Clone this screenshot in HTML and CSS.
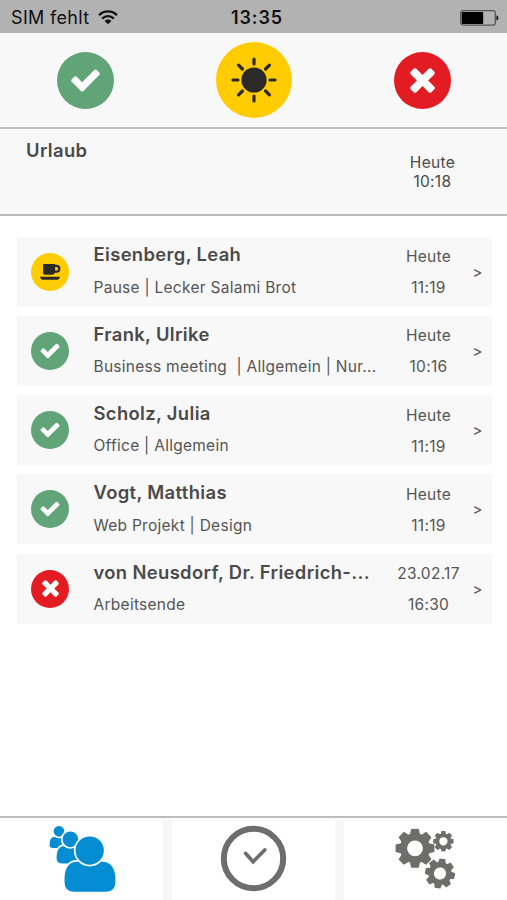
FILE: index.html
```html
<!DOCTYPE html>
<html lang="de">
<head>
<meta charset="utf-8">
<title>Team</title>
<link rel="stylesheet" href="styles.css">
</head>
<body>
<svg class="defs" aria-hidden="true">
  <symbol id="check" viewBox="0 32 1792 1792"><path d="M1671 566q0 40-28 68l-724 724-136 136q-28 28-68 28t-68-28l-136-136-362-362q-28-28-28-68t28-68l136-136q28-28 68-28t68 28l294 295 656-657q28-28 68-28t68 28l136 136q28 28 28 68z"/></symbol>
  <symbol id="cross" viewBox="0 64 1792 1792"><path d="M1490 1322q0 40-28 68l-136 136q-28 28-68 28t-68-28l-294-294-294 294q-28 28-68 28t-68-28l-136-136q-28-28-28-68t28-68l294-294-294-294q-28-28-28-68t28-68l136-136q28-28 68-28t68 28l294 294 294-294q28-28 68-28t68 28l136 136q28 28 28 68t-28 68l-294 294 294 294q28 28 28 68z"/></symbol>
  <symbol id="gear" viewBox="-20 -20 40 40">
    <circle r="11.6" fill="none" stroke="currentColor" stroke-width="7.2"/>
    <g id="teeth"><path id="tooth" d="M-5.2-13.5L-3.8-19.7H3.8L5.2-13.5zM-5.2 13.5L-3.8 19.7H3.8L5.2 13.5z"/><use href="#tooth" transform="rotate(45)"/><use href="#tooth" transform="rotate(90)"/><use href="#tooth" transform="rotate(135)"/></g>
  </symbol>
</svg>
<div class="app">
  <div class="status">
    <div class="carrier"><span>SIM fehlt</span>
      <svg width="20" height="15" viewBox="0 0 20 15" fill="none" stroke="#111" stroke-width="2.3"><path d="M1.1 5.2a12.4 12.4 0 0 1 17.8 0M4.2 8.6a8.2 8.2 0 0 1 11.6 0"/><path d="M10 14.2L6.6 11a4.8 4.8 0 0 1 6.8 0z" fill="#111" stroke="none"/></svg>
    </div>
    <div class="time">13:35</div>
    <svg class="battery" width="39" height="16" viewBox="0 0 39 16"><rect x=".7" y=".7" width="34.6" height="14.4" rx="2.6" fill="none" stroke="#555" stroke-width="1.3"/><rect x="1.8" y="1.9" width="21.4" height="12" rx="1" fill="#000"/><path d="M36.3 5.2q2.3.5 2.3 2.7t-2.3 2.7z" fill="#222"/></svg>
  </div>
  <div class="actions">
    <div class="slot first"><div class="badge big green"><svg width="33" height="33" fill="#fff"><use href="#check"/></svg></div></div>
    <div class="slot"><div class="badge huge yellow">
      <svg width="48" height="48" viewBox="-24 -24 48 48"><circle r="12.6" fill="#2b2a29"/><g stroke="#2b2a29" stroke-width="3.2" stroke-linecap="round"><path d="M0-21V-16M0 21V16M-21 0H-16M21 0H16M-15.4-14.8L-11.6-11M15.4-14.8L11.6-11M-15.4 14.8L-11.6 11M15.4 14.8L11.6 11"/></g></svg>
    </div></div>
    <div class="slot"><div class="badge big red"><svg width="37" height="37" fill="#fff"><use href="#cross"/></svg></div></div>
  </div>
  <div class="current">
    <div class="title">Urlaub</div>
    <div class="since"><span>Heute</span><span>10:18</span></div>
  </div>
  <div class="list">
    <div class="card">
      <div class="badge yellow"><svg width="24" height="20" viewBox="0 0 24 20" fill="#2b2a29"><path d="M5 2h12.200v.8h1.200a4 4 0 0 1 0 8h-1.400q-.6 2-2.800 2H7.800Q5 12.800 5 10.200zM17.200 4.900v3.800h1a1.900 1.900 0 0 0 0-3.800z"/><path d="M2 14.700h20q-.5 3.100-3.400 3.100H5.400Q2.500 17.800 2 14.700z"/></svg></div>
      <div class="info"><div class="name">Eisenberg, Leah</div><div class="note">Pause | Lecker Salami Brot</div></div>
      <div class="when"><span>Heute</span><span>11:19</span></div><div class="more">&gt;</div>
    </div>
    <div class="card">
      <div class="badge green"><svg width="22" height="22" fill="#fff"><use href="#check"/></svg></div>
      <div class="info"><div class="name">Frank, Ulrike</div><div class="note">Business meeting&nbsp; | Allgemein | Nur...</div></div>
      <div class="when"><span>Heute</span><span>10:16</span></div><div class="more">&gt;</div>
    </div>
    <div class="card">
      <div class="badge green"><svg width="22" height="22" fill="#fff"><use href="#check"/></svg></div>
      <div class="info"><div class="name">Scholz, Julia</div><div class="note">Office | Allgemein</div></div>
      <div class="when"><span>Heute</span><span>11:19</span></div><div class="more">&gt;</div>
    </div>
    <div class="card">
      <div class="badge green"><svg width="22" height="22" fill="#fff"><use href="#check"/></svg></div>
      <div class="info"><div class="name">Vogt, Matthias</div><div class="note">Web Projekt | Design</div></div>
      <div class="when"><span>Heute</span><span>11:19</span></div><div class="more">&gt;</div>
    </div>
    <div class="card">
      <div class="badge red"><svg width="25" height="25" fill="#fff"><use href="#cross"/></svg></div>
      <div class="info"><div class="name">von Neusdorf, Dr. Friedrich-...</div><div class="note">Arbeitsende</div></div>
      <div class="when"><span>23.02.17</span><span>16:30</span></div><div class="more">&gt;</div>
    </div>
  </div>
  <div class="tabs">
    <div class="tab">
      <svg width="70" height="70" viewBox="47.300 823.700 70 70" fill="#048dd3" stroke="#fff" stroke-width="1.7">
        <path d="M54.500 835.600C50.500 836 49 840 49 844.500Q49 848.500 53 848.500H66V836z"/><circle cx="59.300" cy="831" r="6.200"/>
        <path d="M63 844.800C58 846 56 852 56 857.500Q56 864 62 864H80V845z"/><circle cx="70.700" cy="839" r="8.700"/>
        <path d="M76 860.500C68 861 64 869 64 878V882Q64 892.300 74 892.300H106.500Q116.500 892.300 116.500 882V878C116.500 869 112 861 104 860.500z"/><circle cx="90" cy="850.300" r="15"/>
      </svg>
    </div>
    <div class="divider"></div>
    <div class="tab">
      <svg width="66" height="66" viewBox="-33.500 -32.500 66 66" fill="none" stroke="#6d6d6d"><circle r="29.700" stroke-width="6"/><path d="M-8-5.200L-.4 3.300L11.400-8.700" stroke-width="3.600" stroke-linecap="round"/></svg>
    </div>
    <div class="divider"></div>
    <div class="tab">
      <svg width="61" height="61" viewBox="395.500 829 61 61" fill="#6d6d6b" color="#6d6d6b">
        <use href="#gear" x="395.700" y="828.500" width="39.600" height="39.600"/>
        <use href="#gear" x="433.500" y="830.900" width="20.800" height="20.800"/>
        <g transform="rotate(10 440.500 873.500)"><use href="#gear" x="425.300" y="858.300" width="30.400" height="30.400"/></g>
      </svg>
    </div>
  </div>
</div>
</body>
</html>
```
FILE: styles.css
```css
* { box-sizing: border-box; }
body { margin: 0; background: #fff; color: #4a4a4a; font-family: Inter, "Liberation Sans", sans-serif; }
svg { display: block; flex: none; overflow: visible; }
.defs { width: 0; height: 0; float: left; }
.app { width: 507px; height: 900px; display: flex; flex-direction: column; overflow: hidden; }
.status { height: 33px; flex: none; background: #b2b2b2; color: #111; display: grid; grid-template-columns: 1fr auto 1fr; align-items: center; padding: 2px 8px 0 11px; font-size: 18px; }
.carrier { display: flex; align-items: center; gap: 9px; white-space: nowrap; letter-spacing: .33px; }
.time { font-weight: 600; letter-spacing: .9px; padding-left: 4px; }
.battery { justify-self: end; }
.actions { height: 96px; flex: none; background: #f8f8f8; border-bottom: 2px solid #bcbcbc; display: flex; align-items: center; }
.slot { flex: 1; display: flex; justify-content: center; }
.first { padding-left: 1.500px; }
.badge { width: 38px; height: 38px; flex: none; border-radius: 50%; display: flex; align-items: center; justify-content: center; }
.big { width: 57px; height: 57px; }
.huge { width: 76px; height: 76px; }
.green { background: #60a477; }
.yellow { background: #ffcc00; }
.red { background: #e31c23; }
.current { height: 87px; flex: none; background: #f8f8f8; border-bottom: 2px solid #bcbcbc; display: flex; justify-content: space-between; padding: 9px 52px 0 26px; }
.title, .name { font-size: 18.400px; font-weight: 600; line-height: 24px; letter-spacing: .36px; white-space: nowrap; }
.since { display: flex; flex-direction: column; align-items: center; padding-top: 15px; font-size: 15.500px; line-height: 19px; letter-spacing: .3px; }
.list { flex: 1; padding: 20.500px 15.500px 0 17px; display: flex; flex-direction: column; gap: 9.300px; }
.card { height: 70px; flex: none; background: #f8f8f8; display: flex; align-items: center; padding-left: 14px; }
.info { width: 300px; margin-left: 24.500px; padding-bottom: 3px; }
.note { font-size: 15.500px; line-height: 20px; margin-top: 11.300px; letter-spacing: .27px; color: #555; white-space: nowrap; }
.when { width: 70px; display: flex; flex-direction: column; align-items: center; gap: 11px; font-size: 15.500px; line-height: 20px; letter-spacing: .3px; color: #555; padding-top: 2px; }
.more { width: 28px; text-align: center; font-size: 15px; color: #555; padding-top: 1px; }
.tabs { height: 84px; flex: none; border-top: 2px solid #bcbcbc; display: flex; }
.tab { flex: 1; display: flex; align-items: center; justify-content: center; }
.divider { width: 8.500px; background: #f7f7f7; margin-top: 2px; }
```
